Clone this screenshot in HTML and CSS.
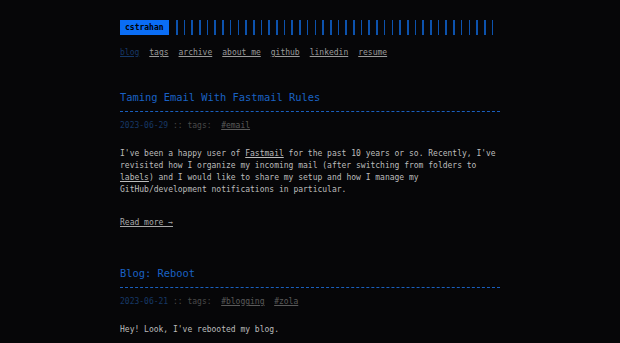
FILE: index.html
```html
<!DOCTYPE html>
<html lang="en">
  <head>
    <meta charset="utf-8">
    <title>cstrahan</title>
    <link rel="stylesheet" href="styles.css">
  </head>
  <body>
    <div class="container">
      <header class="header">
        <div class="header-top">
          <a class="logo" href="#">cstrahan</a>
          <div class="logo-bars"></div>
        </div>
        <nav class="menu">
          <a class="active" href="#">blog</a>
          <a href="#">tags</a>
          <a href="#">archive</a>
          <a href="#">about me</a>
          <a href="#">github</a>
          <a href="#">linkedin</a>
          <a href="#">resume</a>
        </nav>
      </header>

      <div class="post">
        <h1 class="post-title"><a href="#">Taming Email With Fastmail Rules</a></h1>
        <div class="post-meta">
          <span class="post-date">2023-06-29</span> :: tags:&nbsp; <a class="post-tag" href="#">#email</a>
        </div>
        <div class="post-content">
          <p>I've been a happy user of <a href="#">Fastmail</a> for the past 10 years or so. Recently, I've revisited how I organize my incoming mail (after switching from folders to <a href="#">labels</a>) and I would like to share my setup and how I manage my GitHub/development notifications in particular.</p>
        </div>
        <a class="read-more" href="#">Read more →</a>
      </div>

      <div class="post">
        <h1 class="post-title"><a href="#">Blog: Reboot</a></h1>
        <div class="post-meta">
          <span class="post-date">2023-06-21</span> :: tags:&nbsp; <a class="post-tag" href="#">#blogging</a>&nbsp; <a class="post-tag" href="#">#zola</a>
        </div>
        <div class="post-content">
          <p>Hey! Look, I've rebooted my blog.</p>
        </div>
      </div>
    </div>
  </body>
</html>
```

FILE: styles.css
```css
body {
  margin: 0;
  background-color: #060608;
  color: #bcbcbc;
  font-family: "DejaVu Sans Mono", monospace;
  font-size: 8px;
  line-height: 12px;
}

a {
  color: inherit;
}

.container {
  width: 380px;
  margin: 0 auto;
  padding-top: 20px;
}

.header-top {
  display: flex;
  align-items: stretch;
  gap: 7px;
  height: 15px;
}

.logo {
  display: flex;
  align-items: center;
  padding: 0 5px;
  background-color: #0a6df5;
  color: #000;
  font-weight: bold;
  text-decoration: none;
}

.logo-bars {
  flex: 1;
  margin-right: 4px;
  background: repeating-linear-gradient(90deg, #0c52ad 0, #0c52ad 1.5px, transparent 1.5px, transparent 7.7px);
}

.menu {
  display: flex;
  gap: 10px;
  margin-top: 12px;
}

.menu a {
  color: #9a9a9a;
}

.menu a.active {
  color: #163866;
}

.post {
  margin-top: 31px;
}

.post + .post {
  margin-top: 37px;
}

.post-title {
  margin: 0;
  padding-bottom: 7px;
  font-size: 10.4px;
  font-weight: normal;
  line-height: 14px;
}

.post-title::after {
  content: "";
  display: block;
  margin-top: 7px;
  border-top: 1px dashed #1a5fbd;
}

.post-title a {
  color: #1a62c4;
  text-decoration: none;
}

.post-meta {
  margin-top: 1px;
  color: #4a4a4a;
}

.post-date {
  color: #163866;
}

.post-tag {
  color: #5a5a5a;
}

.post-content p {
  margin: 16px 0 0;
}

.read-more {
  display: inline-block;
  margin-top: 21px;
  color: #a8a8a8;
}
```
